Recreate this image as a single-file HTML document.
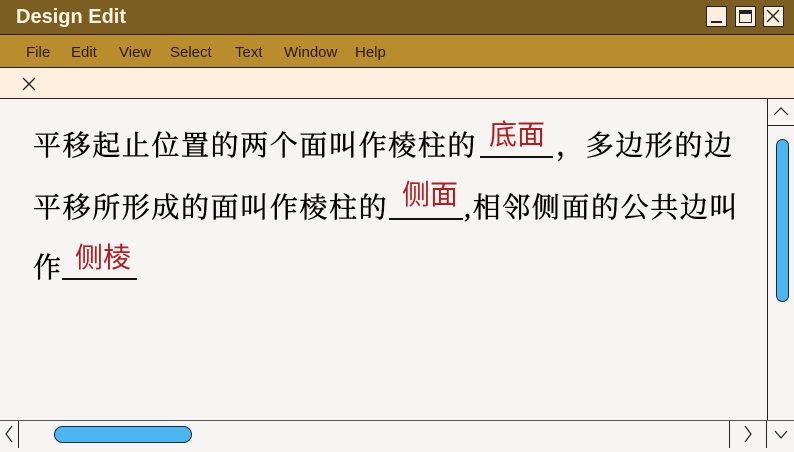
<!DOCTYPE html>
<html><head><meta charset="utf-8"><style>
*{margin:0;padding:0;box-sizing:border-box}
body{width:794px;height:447px;overflow:hidden;background:#f6f5f3;position:relative;font-family:"Liberation Sans",sans-serif}
.title{position:absolute;left:0;top:0;width:794px;height:35px;background:#7d5e22;border-bottom:1px solid #2a1e08}
.title span{position:absolute;left:16px;top:6px;color:#fff6e4;font-weight:bold;font-size:20px}
.wb{position:absolute;top:6px;width:21px;height:21px;background:#fdefe0;border:1.5px solid #222}
.menu{position:absolute;left:0;top:35px;width:794px;height:33px;background:#b98c2e;border-bottom:1.5px solid #222}
.menu span{position:absolute;top:9px;font-size:15px;color:#2a1a05}
.tab{position:absolute;left:0;top:68px;width:794px;height:31px;background:#fdefe0;border-bottom:1.5px solid #222}
.t{position:absolute;font-family:"Liberation Serif","Noto Serif CJK SC",serif;font-size:28px;color:#000;white-space:nowrap;letter-spacing:1.6px;-webkit-text-stroke:0.4px #000}
.r{position:absolute;font-family:"Liberation Sans","Noto Sans CJK SC",sans-serif;font-size:28px;color:#b01e23;white-space:nowrap}
.u{position:absolute;height:2px;background:#111}
.vs{position:absolute;left:767px;top:99px;width:27px;height:321px;border-left:1.5px solid #222;background:#f6f5f3}
.hs{position:absolute;left:0;top:420px;width:794px;height:27px;border-top:1.5px solid #555;background:#f6f5f3}
</style></head><body>
<div class="title"><span>Design Edit</span>
<div class="wb" style="left:706px"><div style="position:absolute;left:4px;right:4px;bottom:3px;height:2px;background:#222"></div></div>
<div class="wb" style="left:735px"><div style="position:absolute;left:3px;right:3px;top:3px;bottom:3px;border:1.5px solid #222;border-top:4px solid #222"></div></div>
<div class="wb" style="left:763px"><svg width="18" height="18" style="position:absolute;left:0;top:0"><path d="M3 3L15 15M15 3L3 15" stroke="#222" stroke-width="1.4"/></svg></div>
</div>
<div class="menu"><span style="left:26px">File</span><span style="left:71px">Edit</span><span style="left:119px">View</span><span style="left:170px">Select</span><span style="left:235px">Text</span><span style="left:284px">Window</span><span style="left:355px">Help</span></div>
<div class="tab"><svg width="16" height="16" style="position:absolute;left:21px;top:8px"><path d="M2 2L14 14M14 2L2 14" stroke="#222" stroke-width="1.3"/></svg></div>

<div class="t" style="left:33px;top:124px">平移起止位置的两个面叫作棱柱的</div>
<div class="u" style="left:480px;top:156px;width:73px"></div>
<div class="r" style="left:489px;top:113px">底面</div>
<div class="t" style="left:556px;top:124px">，多边形的边</div>

<div class="t" style="left:33px;top:186px">平移所形成的面叫作棱柱的</div>
<div class="u" style="left:389px;top:218px;width:74px"></div>
<div class="r" style="left:402px;top:173px">侧面</div>
<div class="t" style="left:464px;top:186px">,相邻侧面的公共边叫</div>

<div class="t" style="left:33px;top:246px">作</div>
<div class="u" style="left:62px;top:278px;width:75px"></div>
<div class="r" style="left:75px;top:236px">侧棱</div>

<div class="vs">
<div style="position:absolute;left:0;top:0;width:26px;height:27px;border-bottom:1.5px solid #222"><svg width="26" height="26"><path d="M6 16L13 9L20 16" stroke="#222" stroke-width="1.2" fill="none"/></svg></div>
<div style="position:absolute;left:8px;top:40px;width:13px;height:163px;background:#4db5f0;border:1.5px solid #1a2a3a;border-radius:7px"></div>
</div>
<div class="hs">
<div style="position:absolute;left:0;top:0;width:19px;height:27px;border-right:1.5px solid #222"><svg width="18" height="26"><path d="M12 5L6 13L12 21" stroke="#222" stroke-width="1.2" fill="none"/></svg></div>
<div style="position:absolute;left:54px;top:5px;width:138px;height:17px;background:#4db5f0;border:1.5px solid #1a2a3a;border-radius:9px"></div>
<div style="position:absolute;left:729px;top:0;width:38px;height:27px;border-left:1.5px solid #222;border-right:1.5px solid #222"><svg width="36" height="26"><path d="M15 5L21 13L15 21" stroke="#222" stroke-width="1.2" fill="none"/></svg></div>
<svg width="26" height="26" style="position:absolute;left:768px;top:0"><path d="M7 10L13 17L19 10" stroke="#222" stroke-width="1.2" fill="none"/></svg>
</div>
</body></html>
